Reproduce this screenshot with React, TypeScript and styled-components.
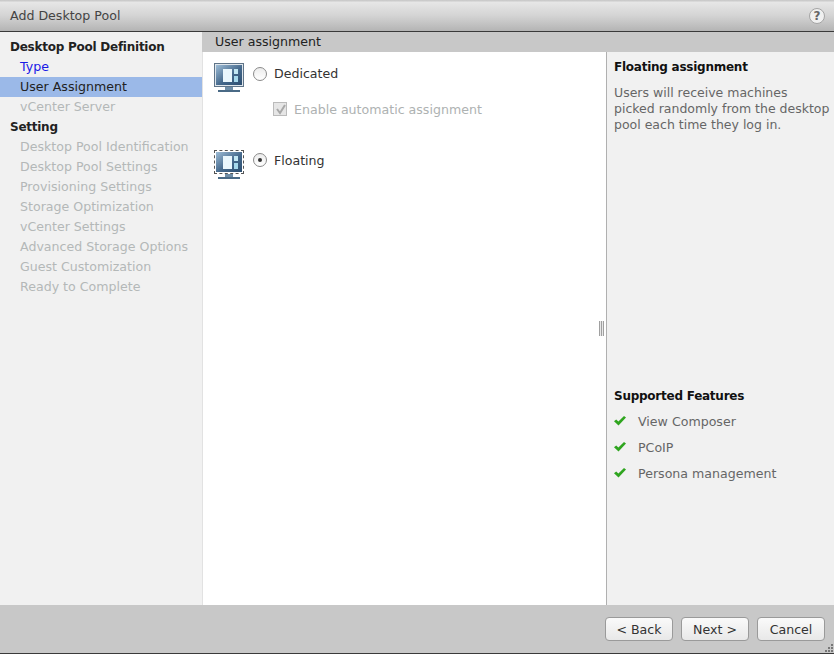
import React from 'react';
import styled, { createGlobalStyle } from 'styled-components';

const GlobalStyle = createGlobalStyle`
  html, body {
    margin: 0;
    padding: 0;
    background: #c8c8c8;
  }
  body {
    font-family: "DejaVu Sans", Verdana, sans-serif;
    font-size: 12.6px;
    color: #333;
  }
`;

const steps = [
  { label: 'Desktop Pool Definition', kind: 'group' },
  { label: 'Type', kind: 'done' },
  { label: 'User Assignment', kind: 'current' },
  { label: 'vCenter Server', kind: 'todo' },
  { label: 'Setting', kind: 'group' },
  { label: 'Desktop Pool Identification', kind: 'todo' },
  { label: 'Desktop Pool Settings', kind: 'todo' },
  { label: 'Provisioning Settings', kind: 'todo' },
  { label: 'Storage Optimization', kind: 'todo' },
  { label: 'vCenter Settings', kind: 'todo' },
  { label: 'Advanced Storage Options', kind: 'todo' },
  { label: 'Guest Customization', kind: 'todo' },
  { label: 'Ready to Complete', kind: 'todo' },
] as const;

const features = ['View Composer', 'PCoIP', 'Persona management'];

function MonitorIcon({ id }: { id: string }) {
  return (
    <svg width="30" height="30" viewBox="0 0 30 30">
      <defs>
        <linearGradient id={id} x1="0" y1="0" x2="1" y2="1">
          <stop offset="0" stopColor="#9dbcd6" />
          <stop offset="0.55" stopColor="#45698c" />
          <stop offset="1" stopColor="#2c4e70" />
        </linearGradient>
      </defs>
      <rect x="0" y="0" width="30" height="24" fill="#5f7488" />
      <rect x="1" y="1" width="28" height="22" fill="#dfe6ec" />
      <rect x="2" y="2" width="26" height="20" fill={`url(#${id})`} />
      <rect x="9" y="6" width="9" height="13" fill="#eaf7fd" />
      <rect x="20" y="6" width="4" height="5" fill="#c3e8f4" />
      <rect x="20" y="13" width="4" height="6" fill="#a6d9ec" />
      <rect x="11" y="24" width="8" height="3" fill="#6f8ea8" />
      <rect x="4" y="27" width="22" height="2" fill="#4a6a86" />
    </svg>
  );
}

function CheckMark() {
  return (
    <svg width="12" height="10" viewBox="0 0 12 10">
      <path d="M0 5.2 L2.2 3.4 L4.4 5.6 L10 0 L12 1.6 L4.5 9.6 Z" fill="#2fa51f" />
    </svg>
  );
}

export default function App() {
  return (
    <>
      <GlobalStyle />
      <Dialog>
        <TitleBar>
          <Title>Add Desktop Pool</Title>
          <HelpCircle>?</HelpCircle>
        </TitleBar>
        <Body>
          <Nav>
            {steps.map(step => (
              <NavItem key={step.label} $kind={step.kind}>
                {step.label}
              </NavItem>
            ))}
          </Nav>
          <Main>
            <MainHeader>User assignment</MainHeader>
            <Panels>
              <Content>
                <OptionRow>
                  <MonitorIcon id="dedicated-screen" />
                  <OptionControl>
                    <Radio />
                    <OptionLabel $raised>Dedicated</OptionLabel>
                  </OptionControl>
                </OptionRow>
                <SubOption>
                  <CheckBox>
                    <svg width="11" height="11" viewBox="0 0 11 11">
                      <path d="M2 5 L5 9 L10 1" fill="none" stroke="#a8a8a8" strokeWidth="2" />
                    </svg>
                  </CheckBox>
                  Enable automatic assignment
                </SubOption>
                <OptionRow $floating>
                  <SelectedIcon>
                    <MonitorIcon id="floating-screen" />
                  </SelectedIcon>
                  <OptionControl $floating>
                    <Radio $checked />
                    <OptionLabel>Floating</OptionLabel>
                  </OptionControl>
                </OptionRow>
                <Grip />
              </Content>
              <Aside>
                <AsideTitle>Floating assignment</AsideTitle>
                <AsideText>
                  Users will receive machines picked randomly from the desktop
                  pool each time they log in.
                </AsideText>
                <Features>
                  <AsideTitle>Supported Features</AsideTitle>
                  <FeatureList>
                    {features.map(feature => (
                      <Feature key={feature}>
                        <CheckMark />
                        {feature}
                      </Feature>
                    ))}
                  </FeatureList>
                </Features>
              </Aside>
            </Panels>
          </Main>
        </Body>
        <Footer>
          <Button>&lt; Back</Button>
          <Button>Next &gt;</Button>
          <Button>Cancel</Button>
          <ResizeGrip viewBox="0 0 10 10" width="10" height="10">
            <path d="M7 1h2v2H7zM4 4h2v2H4zM7 4h2v2H7zM1 7h2v2H1zM4 7h2v2H4zM7 7h2v2H7z" fill="#777" />
          </ResizeGrip>
        </Footer>
      </Dialog>
    </>
  );
}

const Dialog = styled.div`
  width: 834px;
  height: 654px;
  display: flex;
  flex-direction: column;
  overflow: hidden;
  background: #c8c8c8;
`;

const TitleBar = styled.div`
  height: 31px;
  padding: 0 9px 0 10px;
  display: flex;
  align-items: center;
  justify-content: space-between;
  border-bottom: 1px solid #3a3a3a;
  background: linear-gradient(#c4c4c4, #e6e6e6 8%, #d4d4d4 50%, #b4b4b4);
  flex: none;
`;

const Title = styled.div`
  color: #444;
`;

const HelpCircle = styled.div`
  width: 14px;
  height: 14px;
  border: 1px solid #a4a4a4;
  border-radius: 50%;
  background: #f0f0f0;
  display: flex;
  align-items: center;
  justify-content: center;
  font-size: 12px;
  font-weight: 700;
  color: #666;
`;

const Body = styled.div`
  flex: 1;
  display: flex;
  min-height: 0;
`;

const Nav = styled.div`
  width: 202px;
  padding-top: 5px;
  background: #f1f1f1;
  flex: none;
`;

const kindStyles = {
  group: 'font-weight: 700; font-size: 12px; letter-spacing: -0.25px; color: #222; padding-left: 10px;',
  done: 'color: #1a1ae6; padding-left: 20px;',
  current: 'color: #222; background: #9bb9e8; padding-left: 20px;',
  todo: 'color: #b4b8b8; padding-left: 20px;',
};

const NavItem = styled.div<{ $kind: keyof typeof kindStyles }>`
  height: 20px;
  line-height: 20px;
  white-space: nowrap;
  ${p => kindStyles[p.$kind]}
`;

const Main = styled.div`
  flex: 1;
  display: flex;
  flex-direction: column;
  min-width: 0;
`;

const MainHeader = styled.div`
  height: 20px;
  line-height: 20px;
  padding-left: 13px;
  background: #c8c8c8;
  color: #222;
  flex: none;
`;

const Panels = styled.div`
  flex: 1;
  display: flex;
  min-height: 0;
`;

const Content = styled.div`
  position: relative;
  width: 392px;
  padding: 11px 0 0 12px;
  background: #fff;
  border-right: 1px solid #b0b0b0;
  box-shadow: inset 1px 0 #e2e2e2;
  flex: none;
`;

const OptionRow = styled.div<{ $floating?: boolean }>`
  display: flex;
  align-items: flex-start;
  height: 30px;
  margin-top: ${p => (p.$floating ? '31px' : '0')};
`;

const OptionControl = styled.div<{ $floating?: boolean }>`
  display: flex;
  align-items: center;
  height: ${p => (p.$floating ? '20px' : '22px')};
`;

const SelectedIcon = styled.div`
  position: relative;
  width: 30px;
  height: 30px;

  &::before,
  &::after {
    content: '';
    position: absolute;
    left: 0;
    top: 0;
    box-sizing: border-box;
    width: 30px;
    height: 24px;
  }

  &::before {
    border: 2px solid #fff;
  }

  &::after {
    border: 1px dashed #555;
  }
`;

const Radio = styled.span<{ $checked?: boolean }>`
  position: relative;
  width: 12px;
  height: 12px;
  margin: 0 7px 0 9px;
  border: 1px solid #8a8a8a;
  border-radius: 50%;
  background: linear-gradient(#ececec, #fff);
  flex: none;

  &::after {
    content: '';
    display: ${p => (p.$checked ? 'block' : 'none')};
    position: absolute;
    left: 4px;
    top: 4px;
    width: 4px;
    height: 4px;
    border-radius: 50%;
    background: #333;
  }
`;

const OptionLabel = styled.span<{ $raised?: boolean }>`
  color: #333;
  margin-top: ${p => (p.$raised ? '-1px' : '0')};
`;

const SubOption = styled.div`
  display: flex;
  align-items: center;
  height: 20px;
  margin: 6px 0 0 59px;
  color: #aeb2b2;
`;

const CheckBox = styled.span`
  width: 12px;
  height: 12px;
  margin-right: 7px;
  border: 1px solid #bbb;
  background: #e6e6e6;
  display: flex;
  align-items: center;
  justify-content: center;
`;

const Grip = styled.div`
  position: absolute;
  right: 2px;
  top: 269px;
  width: 5px;
  height: 15px;
  background: repeating-linear-gradient(90deg, #a0a0a0 0 1px, #e8e8e8 1px 2px);
`;

const Aside = styled.div`
  flex: 1;
  padding: 7px 2px 0 7px;
  background: #f1f1f1;
  display: flex;
  flex-direction: column;
`;

const AsideTitle = styled.div`
  font-weight: 700;
  font-size: 12px;
  letter-spacing: -0.25px;
  color: #111;
  line-height: 16px;
`;

const AsideText = styled.div`
  margin-top: 10px;
  font-size: 12.5px;
  line-height: 16px;
  color: #666;
`;

const Features = styled.div`
  margin-top: 255px;
`;

const FeatureList = styled.div`
  margin-top: 4px;
`;

const Feature = styled.div`
  display: flex;
  align-items: center;
  gap: 12px;
  height: 26px;
  color: #666;

  svg {
    margin-top: -1px;
  }
`;

const Footer = styled.div`
  position: relative;
  height: 49px;
  flex: none;
  padding: 12px 9px 0 0;
  box-sizing: border-box;
  display: flex;
  justify-content: flex-end;
  gap: 8px;
  background: #c8c8c8;
  border-bottom: 1px solid #3a3a3a;
`;

const Button = styled.button`
  width: 68px;
  height: 24px;
  padding: 0;
  font: inherit;
  color: #333;
  background: linear-gradient(#fafafa, #e8e8e8);
  border: 1px solid #9a9a9a;
  border-radius: 4px;
`;

const ResizeGrip = styled.svg`
  position: absolute;
  right: 0;
  bottom: 0;
`;
